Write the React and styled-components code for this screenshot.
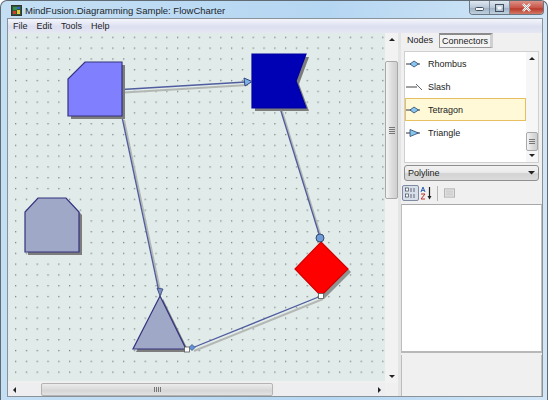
import React from 'react'
import styled, { createGlobalStyle } from 'styled-components'

const GlobalStyle = createGlobalStyle`
  html, body {
    margin: 0;
    padding: 0;
    width: 550px;
    height: 400px;
    overflow: hidden;
    background: #fff;
  }
  body {
    font-family: "Liberation Sans", "Noto Sans", sans-serif;
    color: #1c1c1c;
  }
`

const Window = styled.div`
  width: 548px;
  height: 400px;
  box-sizing: border-box;
  border: 1px solid #5f6a72;
  border-bottom: none;
  border-radius: 7px 7px 0 0;
  padding: 0 4px 3px 6px;
  display: flex;
  flex-direction: column;
  background: linear-gradient(90deg, #c4dff4 0, #b5d6f2 60%, #d2e6f6 100%);
  background-color: #bcdcf5;
`

const TitleBar = styled.div`
  height: 17px;
  flex: none;
  display: flex;
  align-items: flex-start;
  justify-content: space-between;
`

const TitleLeft = styled.div`
  display: flex;
  align-items: center;
  gap: 3px;
  padding: 3px 0 0 4px;
`

const TitleText = styled.span`
  font-size: 9.5px;
  line-height: 13px;
  color: #20262c;
  white-space: nowrap;
`

const Controls = styled.div`
  display: flex;
  height: 13px;
  margin-right: -1px;
  border: 1px solid #6b7884;
  border-top: none;
  border-radius: 0 0 4px 4px;
  overflow: hidden;
`

const ControlButton = styled.div`
  width: ${p => (p.$close ? 33 : 19)}px;
  display: flex;
  align-items: center;
  justify-content: center;
  border-left: ${p => (p.$first ? 'none' : '1px solid #7f8c99')};
  background: ${p => (p.$close
    ? 'linear-gradient(#dc9186, #c9574a 50%, #b93a2c 60%, #d37a66)'
    : 'linear-gradient(#dfe8f1, #b9c8d8 50%, #9fb1c4 55%, #c0d0df)')};
`

const Client = styled.div`
  flex: 1;
  min-height: 0;
  display: flex;
  flex-direction: column;
  background: #f0f0f0;
  border: 1px solid #8a9299;
`

const MenuBar = styled.div`
  height: 14px;
  flex: none;
  display: flex;
  align-items: center;
  padding-left: 5px;
  gap: 9px;
  background: linear-gradient(#f4f5fb, #dcdff0 55%, #e6e7f3);
`

const MenuItem = styled.span`
  font-size: 9px;
  line-height: 12px;
  color: #1e1e1e;
`

const Body = styled.div`
  flex: 1;
  min-height: 0;
  display: flex;
`

const LeftPane = styled.div`
  width: 390px;
  flex: none;
  display: flex;
  flex-direction: column;
  border-right: 3px solid #e4e4e4;
`

const CanvasRow = styled.div`
  flex: 1;
  min-height: 0;
  display: flex;
`

const Canvas = styled.svg`
  width: 377px;
  height: 348px;
  flex: none;
  display: block;
`

const VScroll = styled.div`
  width: 13px;
  flex: none;
  display: flex;
  flex-direction: column;
  align-items: stretch;
  background: #f2f2f2;
`

const ArrowCell = styled.div`
  height: 13px;
  flex: none;
  display: flex;
  align-items: center;
  justify-content: center;
`

const VTrack = styled.div`
  flex: 1;
  min-height: 0;
  padding-top: ${p => p.$top}px;
  box-sizing: border-box;
`

const VThumb = styled.div`
  height: ${p => p.$size}px;
  box-sizing: border-box;
  border: 1px solid #a9a9a9;
  border-radius: 2px;
  background: linear-gradient(90deg, #f4f4f4, #dcdcdc 55%, #cfcfcf);
  display: flex;
  flex-direction: column;
  align-items: center;
  justify-content: center;
  gap: 1px;
`

const GripLine = styled.span`
  width: 6px;
  height: 1px;
  background: #777;
`

const HScroll = styled.div`
  height: 13px;
  flex: none;
  display: flex;
  background: #eeeef1;
`

const HTrack = styled.div`
  flex: 1;
  min-width: 0;
  padding-left: 21px;
`

const HThumb = styled.div`
  width: ${p => p.$size}px;
  height: 100%;
  box-sizing: border-box;
  background: linear-gradient(#ececec, #d6d6d6 60%, #e2e2e2);
  border: 1px solid #b4b4b4;
  border-radius: 2px;
  display: flex;
  align-items: center;
  justify-content: center;
  gap: 1px;
`

const HGrip = styled.span`
  width: 1px;
  height: 5px;
  background: #777;
`

const HArrow = styled.div`
  width: 12px;
  flex: none;
  display: flex;
  align-items: center;
  justify-content: center;
`

const Corner = styled.div`
  width: 13px;
  flex: none;
  background: #f0f0f0;
`

const RightPane = styled.div`
  flex: 1;
  min-width: 0;
  display: flex;
  flex-direction: column;
`

const TabStrip = styled.div`
  height: 15px;
  flex: none;
  display: flex;
  align-items: stretch;
  margin: 0 0 3px 3px;
  gap: 3px;
`

const Tab = styled.div`
  font-size: 9px;
  line-height: 13px;
  padding: 0 2px;
  display: flex;
  align-items: center;
  white-space: nowrap;
  box-sizing: border-box;
  border: ${p => (p.$active ? '1px solid #9a9a9a' : '1px solid transparent')};
  border-top: ${p => (p.$active ? '2px solid #8b8b8b' : '1px solid transparent')};
  border-right: ${p => (p.$active ? '3px solid #d0d0d0' : '1px solid transparent')};
  background: ${p => (p.$active ? '#f4f4f4' : 'transparent')};
`

const ListBox = styled.div`
  height: 112px;
  flex: none;
  margin: 0 3px;
  display: flex;
  background: #fff;
  border: 1px solid #d0d0d0;
  box-sizing: border-box;
`

const Rows = styled.div`
  flex: 1;
  min-width: 0;
  display: flex;
  flex-direction: column;
`

const Row = styled.div`
  height: 23px;
  flex: none;
  box-sizing: border-box;
  display: flex;
  align-items: center;
  gap: 5px;
  font-size: 9px;
  background: ${p => (p.$selected ? '#fff9d8' : 'transparent')};
  border: 1px solid ${p => (p.$selected ? '#e8bf5f' : 'transparent')};
`

const ListScroll = styled.div`
  width: 12px;
  flex: none;
  display: flex;
  flex-direction: column;
  background: #f6f6f6;
`

const ComboBox = styled.div`
  height: 16px;
  flex: none;
  margin: 2px 3px 0 3px;
  box-sizing: border-box;
  border: 1px solid #8e8f8f;
  border-radius: 3px;
  background: linear-gradient(#f2f2f2, #ebebeb 45%, #d3d3d3 55%, #dcdcdc);
  display: flex;
  align-items: center;
  justify-content: space-between;
  padding: 0 3px;
  font-size: 9px;
`

const ToolStrip = styled.div`
  height: 18px;
  flex: none;
  margin: 3px 0 2px 1px;
  display: flex;
  align-items: center;
`

const ToolButton = styled.div`
  width: ${p => p.$w || 15}px;
  height: 16px;
  box-sizing: border-box;
  display: flex;
  align-items: center;
  justify-content: center;
  border: 1px solid ${p => (p.$active ? '#7e8ba0' : 'transparent')};
  border-radius: 2px;
  background: ${p => (p.$active ? '#d6dfea' : 'transparent')};
`

const ToolSep = styled.span`
  width: 1px;
  height: 15px;
  margin: 0 5px 0 3px;
  background: #b5b5b5;
`

const GridPanel = styled.div`
  flex: 1;
  min-height: 0;
  background: #fff;
  border-top: 1px solid #a8a8a8;
  border-left: 1px solid #bdbdbd;
  border-right: 1px solid #bdbdbd;
`

const Splitter = styled.div`
  height: 2px;
  flex: none;
  background: #f0f0f0;
  border-top: 2px solid #b8b8b8;
`

const HelpPanel = styled.div`
  height: 41px;
  flex: none;
  background: #f0f0f0;
  border-left: 1px solid #bdbdbd;
  border-right: 1px solid #bdbdbd;
`

const Tri = ({ dir, color = '#222', size = 3 }) => {
  const pts = {
    up: `0,${size} ${size},0 ${size * 2},${size}`,
    down: `0,0 ${size * 2},0 ${size},${size}`,
    left: `${size},0 ${size},${size * 2} 0,${size}`,
    right: `0,0 0,${size * 2} ${size},${size}`,
  }[dir]
  const horizontal = dir === 'right' || dir === 'left'
  return (
    <svg width={horizontal ? size : size * 2} height={horizontal ? size * 2 : size}>
      <polygon points={pts} fill={color} />
    </svg>
  )
}

const AppIcon = () => (
  <svg width="11" height="11" viewBox="0 0 11 11">
    <rect x="0.5" y="0.5" width="10" height="10" fill="#2d5b3a" stroke="#333" />
    <rect x="2" y="2" width="4" height="3" fill="#3a8f4a" />
    <rect x="2" y="6" width="3" height="3" fill="#d83a2a" />
    <rect x="6" y="5" width="3" height="4" fill="#e6c93a" />
    <rect x="6" y="2" width="3" height="2" fill="#3a5fd0" />
  </svg>
)

// connector heads in the list
const HeadIcon = ({ kind }) => (
  <svg width="17" height="12" viewBox="0 0 17 12">
    {kind === 'slash' ? (
      <>
        <line x1="0" y1="6" x2="11" y2="6" stroke="#444" strokeWidth="1" />
        <line x1="10" y1="3" x2="16" y2="9" stroke="#666" strokeWidth="1" />
      </>
    ) : (
      <>
        <line x1="0" y1="6" x2="14" y2="6" stroke="#334" strokeWidth="1" />
        {kind === 'triangle' ? (
          <polygon points="4,2.5 12.5,6 4,9.5" fill="#86c6ef" stroke="#2c4468" strokeWidth="0.8" />
        ) : (
          <polygon points="4,6 8,3 12.5,6 8,9" fill="#86c6ef" stroke="#2c4468" strokeWidth="0.8" />
        )}
      </>
    )}
  </svg>
)

const CategorizedIcon = () => (
  <svg width="12" height="12" viewBox="0 0 12 12">
    <rect x="0.5" y="1" width="3" height="3" fill="#fff" stroke="#445" strokeWidth="0.7" />
    <rect x="0.5" y="7" width="3" height="3" fill="#fff" stroke="#445" strokeWidth="0.7" />
    <path d="M5 2h6M5 4h6M5 8h6M5 10h6" stroke="#667" strokeWidth="1" strokeDasharray="2 1" />
  </svg>
)

const SortIcon = () => (
  <svg width="13" height="14" viewBox="0 0 13 14">
    <path d="M1 6 3 1l2 5M1.7 4.4h2.6" fill="none" stroke="#2a5fb0" strokeWidth="1" />
    <path d="M1 8h4L1 13h4" fill="none" stroke="#c0332a" strokeWidth="1" />
    <path d="M9.5 1v10" stroke="#222" strokeWidth="1.2" />
    <polygon points="7.5,10 11.5,10 9.5,13.5" fill="#222" />
  </svg>
)

const PagesIcon = () => (
  <svg width="12" height="12" viewBox="0 0 12 12">
    <rect x="0.5" y="1.5" width="11" height="9" fill="#e4e4e4" stroke="#b0b0b0" />
    <path d="M2 4h8M2 6h8M2 8h8" stroke="#c4c4c4" />
  </svg>
)

const MinGlyph = () => (
  <svg width="9" height="6"><rect x="0.5" y="2.5" width="8" height="3" rx="1" fill="#f4f6f8" stroke="#44505c" /></svg>
)
const MaxGlyph = () => (
  <svg width="9" height="8"><rect x="0.5" y="0.5" width="8" height="7" fill="none" stroke="#44505c" /><rect x="2.5" y="2.5" width="4" height="3" fill="#f4f6f8" /></svg>
)
const CloseGlyph = () => (
  <svg width="11" height="9"><path d="M2 1l7 7M9 1L2 8" stroke="#fff" strokeWidth="2.4" /><path d="M2 1l7 7M9 1L2 8" stroke="#3f3f3f" strokeWidth="0.4" /></svg>
)

const edge = '#33337f'
const link = '#4f5c9e'

const Connector = ({ d }) => (
  <>
    <path d={d} transform="translate(2 3)" fill="none" stroke="#b4b8b4" strokeWidth="2" />
    <path d={d} fill="none" stroke={link} strokeWidth="1.3" />
  </>
)

const Shape = ({ points, fill, stroke = edge, shadow = '#7d7d7d' }) => (
  <>
    <polygon points={points} transform="translate(3 3)" fill={shadow} />
    <polygon points={points} fill={fill} stroke={stroke} strokeWidth="1.2" />
  </>
)

const Diagram = () => (
  <Canvas viewBox="8 34 377 348">
    <defs>
      <pattern id="dots" x="4.2" y="5.3" width="10.8" height="10.8" patternUnits="userSpaceOnUse">
        <rect x="0" y="0" width="1.3" height="1.3" fill="#7d8685" />
      </pattern>
    </defs>
    <rect x="8" y="34" width="377" height="348" fill="#e1ebe9" />
    <rect x="8" y="34" width="377" height="348" fill="url(#dots)" />

    <Connector d="M122 90.5 L246 83" />
    <Connector d="M122 118 L159 293" />
    <Connector d="M280 109 L319 235" />
    <Connector d="M321 297 L192 349" />

    <Shape points="85,63 122,63 122,117 68,117 68,80" fill="#8080ff" />
    <Shape points="252,55 306,55 296,82 306,109 252,109" fill="#0000b4" stroke="#0000a0" />
    <Shape points="38,199 66,199 79,213 79,253 25,253 25,213" fill="#a0a8c8" />
    <Shape points="160,297 186,350 133,350" fill="#a0a8c8" />
    <Shape points="321,243 348,270 321,297 295,270" fill="#ff0000" stroke="#d00000" shadow="#8f9392" />

    <polygon points="244,79 252,82.5 245,87" fill="#7fb2e6" stroke="#33447f" strokeWidth="1" />
    <polygon points="157,289 160,297 163,290" fill="#7f8fc0" stroke="#33447f" strokeWidth="0.8" />
    <circle cx="320" cy="239" r="4" fill="#6f9bd6" stroke="#334a70" strokeWidth="1" />
    <rect x="318.5" y="294.5" width="5" height="5" fill="#fff" stroke="#555" strokeWidth="0.8" />
    <polygon points="192,345.5 195,348.5 192,351.5 189,348.5" fill="#5f94d8" stroke="#33447f" strokeWidth="0.7" />
    <rect x="184.5" y="348" width="5" height="5" fill="#fff" stroke="#555" strokeWidth="0.8" />
  </Canvas>
)

const connectors = [
  { name: 'Rhombus', kind: 'rhombus' },
  { name: 'Slash', kind: 'slash' },
  { name: 'Tetragon', kind: 'tetragon', selected: true },
  { name: 'Triangle', kind: 'triangle' },
]

const App = () => (
  <>
    <GlobalStyle />
    <Window>
      <TitleBar>
        <TitleLeft>
          <AppIcon />
          <TitleText>MindFusion.Diagramming Sample: FlowCharter</TitleText>
        </TitleLeft>
        <Controls>
          <ControlButton $first><MinGlyph /></ControlButton>
          <ControlButton><MaxGlyph /></ControlButton>
          <ControlButton $close><CloseGlyph /></ControlButton>
        </Controls>
      </TitleBar>
      <Client>
        <MenuBar>
          <MenuItem>File</MenuItem>
          <MenuItem>Edit</MenuItem>
          <MenuItem>Tools</MenuItem>
          <MenuItem>Help</MenuItem>
        </MenuBar>
        <Body>
          <LeftPane>
            <CanvasRow>
              <Diagram />
              <VScroll>
                <ArrowCell><Tri dir="up" /></ArrowCell>
                <VTrack $top={15}>
                  <VThumb $size={138}>
                    <GripLine /><GripLine /><GripLine /><GripLine />
                  </VThumb>
                </VTrack>
                <ArrowCell><Tri dir="down" /></ArrowCell>
              </VScroll>
            </CanvasRow>
            <HScroll>
              <HArrow><Tri dir="left" /></HArrow>
              <HTrack>
                <HThumb $size={232}>
                  <HGrip /><HGrip /><HGrip /><HGrip />
                </HThumb>
              </HTrack>
              <HArrow><Tri dir="right" /></HArrow>
              <Corner />
            </HScroll>
          </LeftPane>
          <RightPane>
            <TabStrip>
              <Tab>Nodes</Tab>
              <Tab $active>Connectors</Tab>
            </TabStrip>
            <ListBox>
              <Rows>
                {connectors.map(c => (
                  <Row key={c.name} $selected={c.selected}>
                    <HeadIcon kind={c.kind} />
                    {c.name}
                  </Row>
                ))}
              </Rows>
              <ListScroll>
                <ArrowCell><Tri dir="up" /></ArrowCell>
                <VTrack $top={67}>
                  <VThumb $size={19}>
                    <GripLine /><GripLine /><GripLine />
                  </VThumb>
                </VTrack>
                <ArrowCell><Tri dir="down" /></ArrowCell>
              </ListScroll>
            </ListBox>
            <ComboBox>
              Polyline
              <Tri dir="down" size={3.5} />
            </ComboBox>
            <ToolStrip>
              <ToolButton $active $w={17}><CategorizedIcon /></ToolButton>
              <ToolButton><SortIcon /></ToolButton>
              <ToolSep />
              <ToolButton $w={13}><PagesIcon /></ToolButton>
            </ToolStrip>
            <GridPanel />
            <Splitter />
            <HelpPanel />
          </RightPane>
        </Body>
      </Client>
    </Window>
  </>
)

export default App
